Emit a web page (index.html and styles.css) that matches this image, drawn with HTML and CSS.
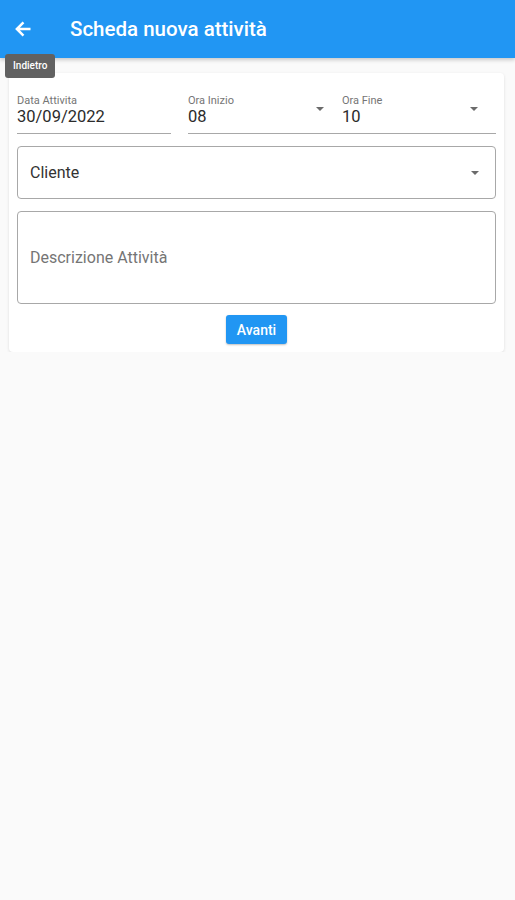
FILE: index.html
```html
<!DOCTYPE html>
<html>

<head>
    <title>Scheda nuova attività</title>
    <link rel="stylesheet" href="styles.css">
</head>

<body>
    <header class="app-bar">
        <button class="back-btn" type="button">
            <svg width="20" height="20" viewBox="0 0 24 24">
                <path d="M21 10.5H8.3l5.3-5.3L11.5 3 2.5 12l9 9 2.1-2.2-5.3-5.3H21z" fill="#fff"/>
            </svg>
        </button>
        <h1 class="app-title">Scheda nuova attività</h1>
        <span class="tooltip">Indietro</span>
    </header>

    <main class="content">
        <form class="card">
            <div class="row">
                <div class="field field-date">
                    <label>Data Attivita</label>
                    <div class="value">30/09/2022</div>
                </div>
                <div class="field field-select">
                    <label>Ora Inizio</label>
                    <div class="value">08</div>
                    <span class="caret"></span>
                </div>
                <div class="field field-select">
                    <label>Ora Fine</label>
                    <div class="value">10</div>
                    <span class="caret"></span>
                </div>
            </div>

            <div class="box box-select">
                <span class="box-text">Cliente</span>
                <span class="caret"></span>
            </div>

            <div class="box box-area">
                <span class="box-text placeholder">Descrizione Attività</span>
            </div>

            <div class="actions">
                <button class="inner-button" type="submit">Avanti</button>
            </div>
        </form>
    </main>
</body>

</html>
```

FILE: styles.css
```css
body {
    font-family: Roboto, "Liberation Sans", sans-serif;
    background-color: #fafafa;
    margin: 0;
    color: #222;
}

.app-bar {
    position: relative;
    display: flex;
    align-items: center;
    height: 58px;
    background-color: #2196f3;
    box-shadow: 0 2px 4px rgba(0, 0, 0, 0.2);
}

.back-btn {
    display: flex;
    align-items: center;
    justify-content: center;
    width: 20px;
    height: 20px;
    margin-left: 13px;
    padding: 0;
    border: none;
    background: none;
}

.app-title {
    margin: 0 0 0 37px;
    color: #fff;
    font-size: 20.5px;
    font-weight: 500;
}

.tooltip {
    position: absolute;
    left: 5px;
    top: 54px;
    padding: 0 8px;
    height: 24px;
    line-height: 24px;
    border-radius: 3px;
    background-color: #616161;
    color: #fff;
    font-size: 10px;
    font-weight: 500;
    z-index: 2;
}

.content {
    padding: 15px 11px 0 9px;
}

.card {
    background-color: #fff;
    border-radius: 4px;
    box-shadow: 0 1px 3px rgba(0, 0, 0, 0.12);
    padding: 14px 8px 8px 8px;
}

.row {
    display: flex;
    height: 47px;
}

.field {
    position: relative;
    box-sizing: border-box;
    padding-top: 7px;
    border-bottom: 1px solid #a8a8a8;
}

.field-date {
    width: 154px;
    margin-right: 17px;
}

.field-select {
    flex: 1;
}

.field label {
    display: block;
    font-size: 11px;
    color: #757575;
    line-height: 13px;
}

.value {
    font-size: 16.5px;
    line-height: 19px;
    color: #2b2b2b;
}

.caret {
    position: absolute;
    right: 16px;
    width: 0;
    height: 0;
    border-left: 4px solid transparent;
    border-right: 4px solid transparent;
    border-top: 4px solid #6b6b6b;
}

.field .caret {
    top: 20px;
    right: 18px;
}

.box {
    position: relative;
    display: flex;
    align-items: center;
    margin-top: 12px;
    border: 1px solid #a8a8a8;
    border-radius: 4px;
    padding: 0 12px;
}

.box-select {
    height: 51px;
}

.box-select .caret {
    top: 24px;
}

.box-area {
    height: 91px;
}

.box-text {
    font-size: 16px;
    color: #333;
}

.placeholder {
    color: #757575;
}

.actions {
    display: flex;
    justify-content: center;
    margin-top: 11px;
}

.inner-button {
    height: 29px;
    padding: 0 11px;
    border: unset;
    border-radius: 3px;
    background: #2196f3;
    color: #fff;
    font-family: Roboto, "Liberation Sans", sans-serif;
    font-size: 14px;
    font-weight: 500;
    box-shadow: 0 1px 2px rgba(0, 0, 0, 0.25);
}
```
